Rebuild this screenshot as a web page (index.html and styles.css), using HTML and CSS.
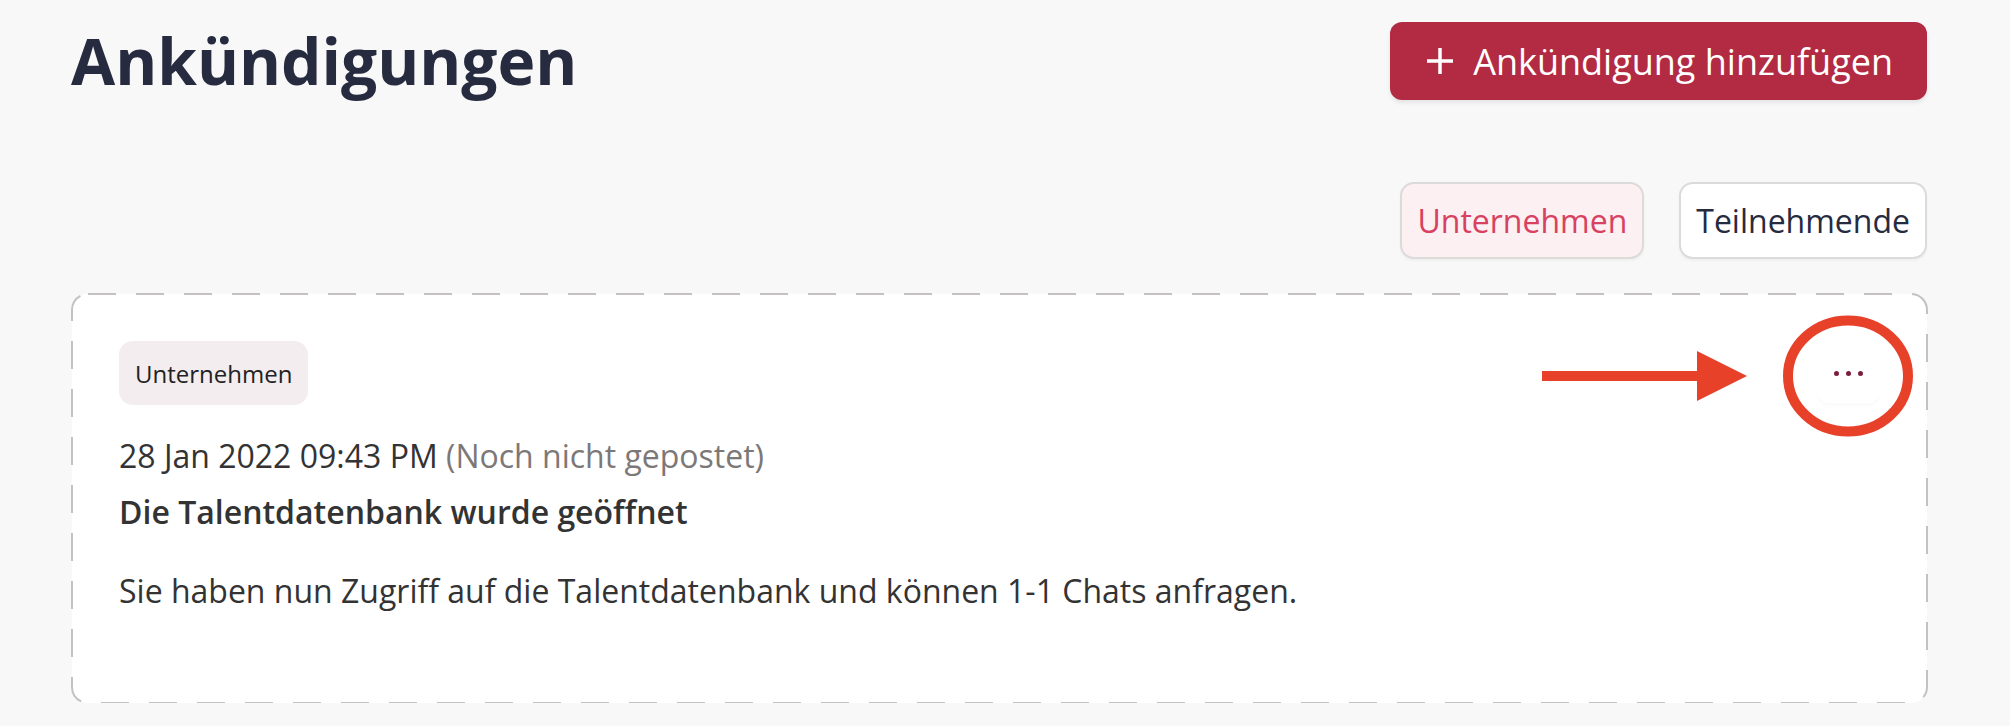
FILE: index.html
```html
<!DOCTYPE html>
<html lang="de">
<head>
    <meta charset="UTF-8">
    <meta name="viewport" content="width=device-width, initial-scale=1.0">
    <title>Ankündigungen</title>
    <link rel="stylesheet" href="styles.css">
</head>
<body>
    <main class="page">
        <header class="page-header">
            <h1>Ankündigungen</h1>
            <button class="btn-primary" type="button">
                <svg class="plus" viewBox="0 0 28 28" width="28" height="28" aria-hidden="true">
                    <path d="M14 1v26M1 14h26" stroke="#ffffff" stroke-width="3.5" fill="none"/>
                </svg>
                Ankündigung hinzufügen
            </button>
        </header>

        <div class="filters">
            <button class="filter active" type="button">Unternehmen</button>
            <button class="filter" type="button">Teilnehmende</button>
        </div>

        <article class="card">
            <!-- dashed outline, drawn with svg so the dashes can be long -->
            <svg class="card-outline" aria-hidden="true">
                <rect x="0" y="0" width="100%" height="100%" rx="16" ry="16"/>
            </svg>

            <div class="card-top">
                <span class="tag">Unternehmen</span>
                <button class="menu-btn" type="button" aria-label="Mehr">
                    <span class="dot"></span><span class="dot"></span><span class="dot"></span>
                </button>
            </div>
            <p class="meta">28 Jan 2022 09:43 PM <span class="muted">(Noch nicht gepostet)</span></p>
            <h2 class="card-title">Die Talentdatenbank wurde geöffnet</h2>
            <p class="card-text">Sie haben nun Zugriff auf die Talentdatenbank und können 1-1 Chats anfragen.</p>

            <!-- red annotation pointing at the menu -->
            <svg class="annotation" viewBox="0 0 390 130" width="390" height="130" aria-hidden="true">
                <rect x="10" y="61" width="157" height="10" fill="#e8412a"/>
                <polygon points="165,41 215,66 165,91" fill="#e8412a"/>
                <ellipse cx="316" cy="66" rx="60" ry="55.5" fill="none" stroke="#e8412a" stroke-width="10"/>
            </svg>
        </article>
    </main>
</body>
</html>
```

FILE: styles.css
```css
body {
    margin: 0;
    font-family: 'Open Sans', 'Noto Sans', sans-serif;
    background-color: #f8f8f8;
    color: #333333;
}
.page {
    padding: 22px 83px 0 71px;
}
.page-header {
    display: flex;
    justify-content: space-between;
    align-items: center;
}
h1 {
    margin: 0;
    font-size: 64px;
    font-weight: 700;
    line-height: 1;
    color: #272b3f;
}
.btn-primary {
    display: inline-flex;
    align-items: center;
    gap: 19px;
    height: 78px;
    padding: 0 34px 0 36px;
    font-family: inherit;
    font-size: 36px;
    color: #ffffff;
    background: #b32a43;
    border: none;
    border-radius: 12px;
    box-shadow: 0 3px 4px rgba(0, 0, 0, 0.08);
}
.btn-primary .plus {
    flex: none;
}
.filters {
    display: flex;
    justify-content: flex-end;
    gap: 35px;
    margin-top: 82px;
}
.filter {
    height: 77px;
    padding: 0 15px;
    font-family: inherit;
    font-size: 32px;
    color: #272b3f;
    background: #ffffff;
    border: 2px solid #dddada;
    border-radius: 14px;
    box-shadow: 0 2px 3px rgba(0, 0, 0, 0.04);
}
.filter.active {
    color: #d8415f;
    background: #fcf0f3;
}
.card {
    position: relative;
    margin-top: 35px;
    margin-left: 1px;
    padding: 47px 47px 88px 47px;
    background: #ffffff;
    border-radius: 16px;
}
.card-outline {
    position: absolute;
    top: 0;
    left: 0;
    width: 100%;
    height: 100%;
    overflow: visible;
    pointer-events: none;
}
.card-outline rect {
    fill: none;
    stroke: #c6c1c1;
    stroke-width: 2;
    stroke-dasharray: 28 20;
}
.card-top {
    display: flex;
    justify-content: space-between;
    align-items: center;
    height: 64px;
}
.tag {
    display: inline-flex;
    align-items: center;
    height: 64px;
    padding: 0 16px;
    font-size: 24px;
    color: #222222;
    background: #f3edef;
    border-radius: 14px;
}
.menu-btn {
    display: flex;
    justify-content: center;
    align-items: center;
    gap: 7px;
    width: 63px;
    height: 60px;
    padding: 0;
    background: #ffffff;
    border: none;
    border-radius: 12px;
    box-shadow: 0 3px 3px rgba(0, 0, 0, 0.02);
}
.dot {
    width: 5px;
    height: 5px;
    border-radius: 50%;
    background: #7a1f3a;
}
.meta,
.card-title,
.card-text {
    font-size: 32px;
    line-height: 48px;
    color: #333333;
}
.meta {
    margin: 27px 0 0;
}
.muted {
    color: #7d7878;
}
.card-title {
    margin: 8px 0 0;
    font-weight: 600;
}
.card-text {
    margin: 31px 0 0;
}
.annotation {
    position: absolute;
    top: 16px;
    right: 5px;
    pointer-events: none;
}
```
